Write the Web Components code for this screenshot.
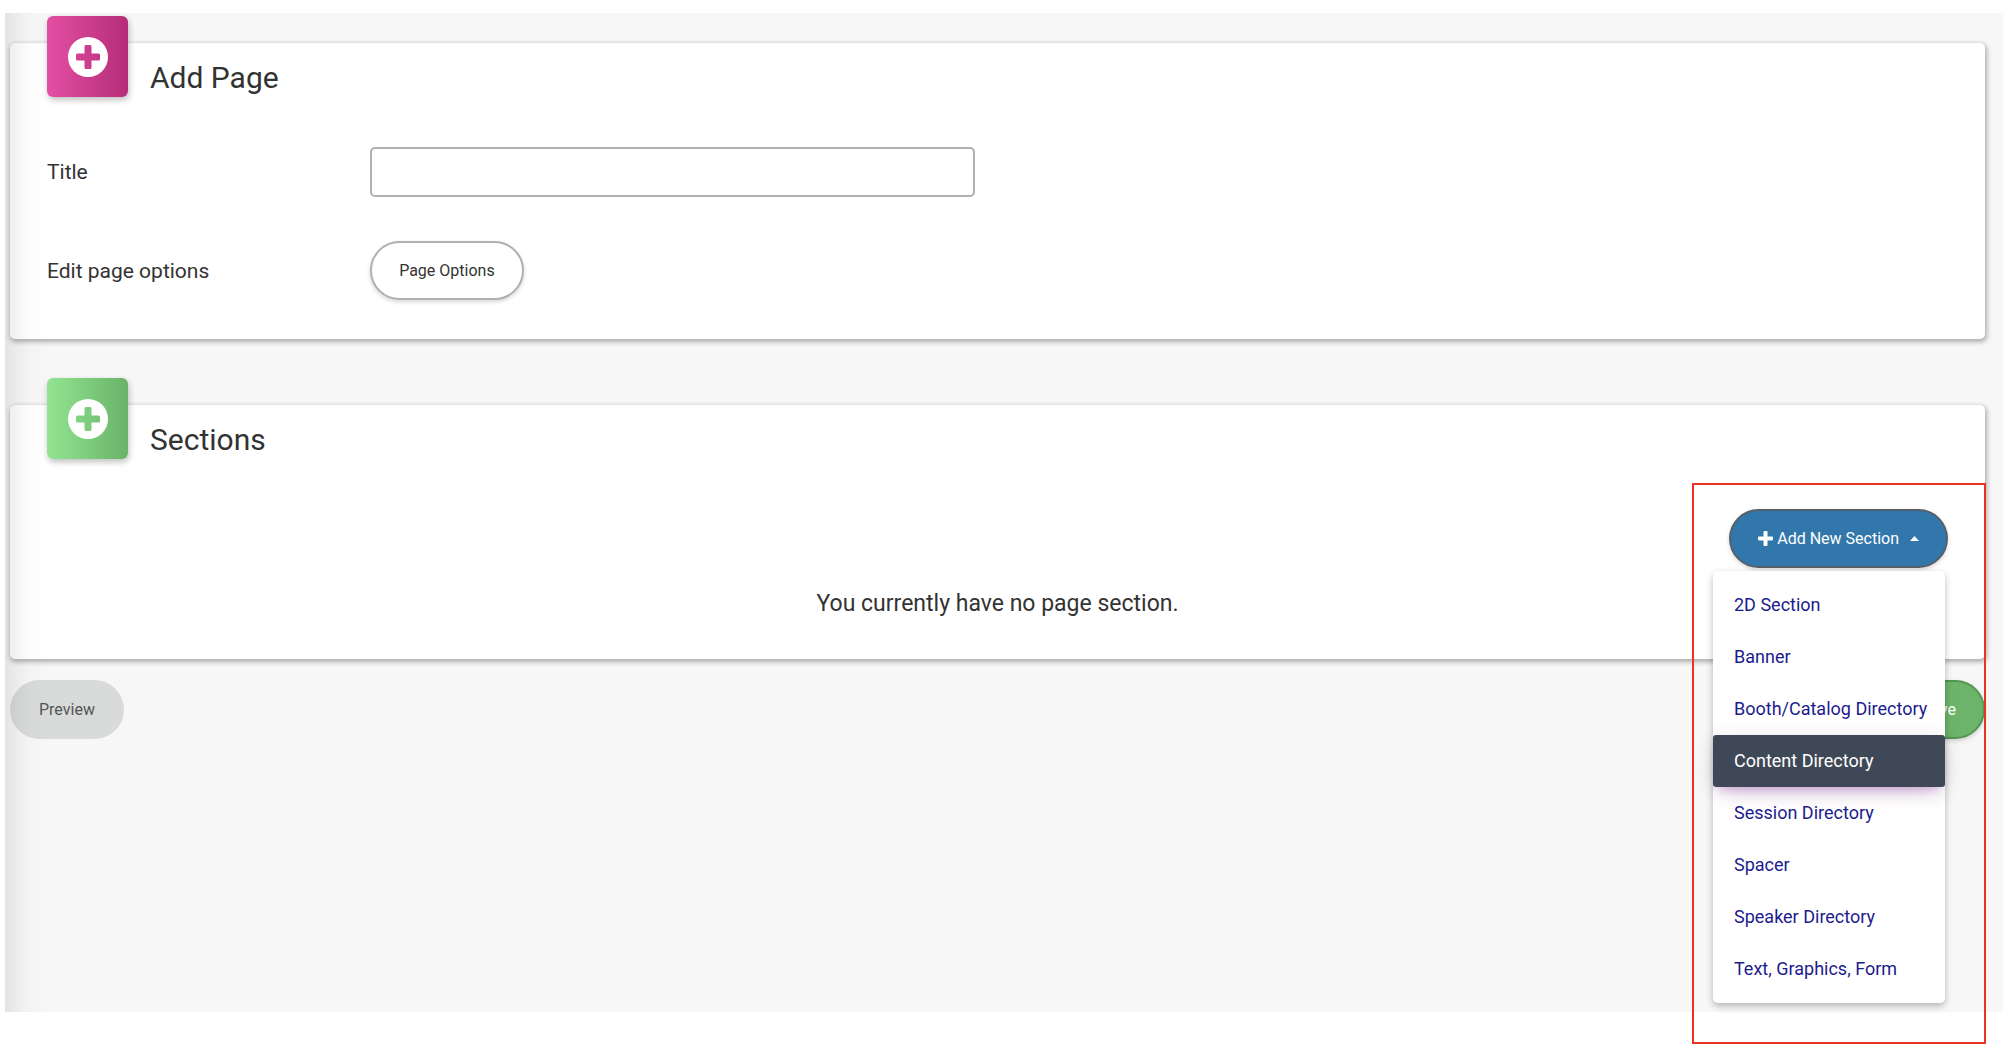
<!DOCTYPE html>
<html lang="en">
<head>
<meta charset="utf-8">
<title>Add Page</title>
<style>
    body {
        box-sizing: border-box;
        min-height: 100vh;
        margin: 0;
        padding: 13px 13px 42px 5px;
        background: #fff;
        color: #333;
        font-family: Roboto, "Liberation Sans", sans-serif;
    }
</style>
</head>
<body>
<page-panel>
    <section-card heading="Add Page" color="pink">
        <form-row label="Title" type="text"></form-row>
        <form-row label="Edit page options" type="button" text="Page Options"></form-row>
    </section-card>
    <section-card heading="Sections" color="green">
        <section-menu active="Content Directory"></section-menu>
        <empty-message>You currently have no page section.</empty-message>
    </section-card>
    <pill-button slot="footer" kind="muted">Preview</pill-button>
    <pill-button slot="footer" kind="success">Save</pill-button>
</page-panel>

<script>
const pillStyle = `
    button {
        display: flex;
        align-items: center;
        box-sizing: border-box;
        height: 59px;
        padding: 0 27px;
        border: 2px solid #b0b0b0;
        border-radius: 30px;
        background: #fff;
        color: #333;
        font: 400 16px/24px Roboto, "Liberation Sans", sans-serif;
        white-space: nowrap;
        cursor: pointer;
        box-shadow: 0 2px 4px rgba(0, 0, 0, .16);
    }
`;

class PagePanel extends HTMLElement {
    constructor() {
        super();
        this.attachShadow({ mode: 'open' });
    }

    connectedCallback() {
        this.shadowRoot.innerHTML = `
        <style>
            :host {
                display: block;
                position: relative;
                box-sizing: border-box;
                min-height: calc(100vh - 55px);
                padding: 30px 18px 30px 5px;
                background: #f7f7f7;
            }
            /* shade along the left edge, over the cards */
            :host::after {
                content: '';
                position: absolute;
                inset: 0 auto 0 0;
                width: 44px;
                background: linear-gradient(90deg, rgba(0, 0, 0, .08), rgba(0, 0, 0, .015) 50%, rgba(0, 0, 0, 0));
                pointer-events: none;
            }
            main {
                display: flex;
                flex-direction: column;
                gap: 66px;
            }
            footer {
                display: flex;
                justify-content: space-between;
                margin-top: 21px;
            }
        </style>
        <main><slot></slot></main>
        <footer><slot name="footer"></slot></footer>
        `;
    }
}

class SectionCard extends HTMLElement {
    constructor() {
        super();
        this.attachShadow({ mode: 'open' });
    }

    get heading() {
        return this.getAttribute('heading');
    }

    connectedCallback() {
        this.shadowRoot.innerHTML = `
        <style>
            :host {
                display: block;
                padding: 0 37px 39px;
                border-radius: 5px;
                background: #fff;
                box-shadow: 1px 2px 5px 1px rgba(0, 0, 0, .3);
                --from: #e34fa3;
                --to: #b52d78;
            }
            :host([color=green]) {
                --from: #93e592;
                --to: #69b368;
            }
            header {
                display: flex;
                align-items: flex-start;
                gap: 22px;
                height: 104px;
            }
            .badge {
                display: grid;
                place-items: center;
                width: 81px;
                height: 81px;
                margin-top: -27px;
                border-radius: 6px;
                background: linear-gradient(90deg, var(--from), var(--to));
                box-shadow: 1px 3px 6px rgba(0, 0, 0, .25);
            }
            h2 {
                margin: 17px 0 0;
                font-size: 30px;
                font-weight: 400;
                line-height: 36px;
            }
            .body {
                display: flex;
                flex-direction: column;
            }
        </style>
        <header>
            <div class="badge">
                <svg width="40" height="40" viewBox="0 0 40 40" aria-hidden="true">
                    <path fill="#fff" fill-rule="evenodd" d="M20 0a20 20 0 1 0 0 40a20 20 0 1 0 0-40zM18 8h4a1.500 1.500 0 0 1 1.500 1.500v7h7a1.500 1.500 0 0 1 1.500 1.500v4a1.500 1.500 0 0 1-1.500 1.500h-7v7a1.500 1.500 0 0 1-1.500 1.500h-4a1.500 1.500 0 0 1-1.500-1.500v-7h-7a1.500 1.500 0 0 1-1.500-1.500v-4a1.500 1.500 0 0 1 1.500-1.500h7v-7a1.500 1.500 0 0 1 1.500-1.500z"/>
                </svg>
            </div>
            <h2>${this.heading}</h2>
        </header>
        <div class="body"><slot></slot></div>
        `;
    }
}

class FormRow extends HTMLElement {
    constructor() {
        super();
        this.attachShadow({ mode: 'open' });
    }

    get control() {
        if (this.getAttribute('type') == 'button') {
            return `<button id="control" type="button">${this.getAttribute('text')}</button>`;
        }
        return `<input id="control" type="text">`;
    }

    connectedCallback() {
        this.shadowRoot.innerHTML = `
        <style>
            ${pillStyle}
            :host {
                display: grid;
                grid-template-columns: 17% 1fr;
                align-items: center;
            }
            :host(:not(:first-child)) {
                margin-top: 44px;
            }
            label {
                font-size: 21px;
                line-height: 28px;
            }
            input {
                box-sizing: border-box;
                width: min(605px, 100%);
                height: 50px;
                padding: 0 12px;
                border: 2px solid #b0b0b0;
                border-radius: 5px;
                background: #fff;
                font: 400 21px Roboto, sans-serif;
            }
            button {
                justify-self: start;
            }
        </style>
        <label for="control">${this.getAttribute('label')}</label>
        ${this.control}
        `;
    }
}

class EmptyMessage extends HTMLElement {
    constructor() {
        super();
        this.attachShadow({ mode: 'open' });
    }

    connectedCallback() {
        this.shadowRoot.innerHTML = `
        <style>
            :host {
                display: block;
                margin-top: 20px;
                font-size: 23px;
                line-height: 32px;
                text-align: center;
            }
        </style>
        <slot></slot>
        `;
    }
}

class PillButton extends HTMLElement {
    constructor() {
        super();
        this.attachShadow({ mode: 'open' });
    }

    connectedCallback() {
        this.shadowRoot.innerHTML = `
        <style>
            ${pillStyle}
            :host {
                display: block;
            }
            :host([kind=muted]) button {
                border-color: #d9dbda;
                background: #d9dbda;
                color: #555;
                box-shadow: none;
            }
            :host([kind=success]) button {
                border-color: #549653;
                background: #6bb469;
                color: #fff;
            }
        </style>
        <button type="button"><slot></slot></button>
        `;
    }
}

class SectionMenu extends HTMLElement {
    constructor() {
        super();
        this.attachShadow({ mode: 'open' });
        this.items = [
            '2D Section',
            'Banner',
            'Booth/Catalog Directory',
            'Content Directory',
            'Session Directory',
            'Spacer',
            'Speaker Directory',
            'Text, Graphics, Form'
        ];
    }

    get active() {
        return this.getAttribute('active');
    }

    connectedCallback() {
        const links = this.items.map(item =>
            `<a href="#" class="${item == this.active ? 'active' : ''}">${item}</a>`
        ).join('');

        this.shadowRoot.innerHTML = `
        <style>
            ${pillStyle}
            :host {
                display: block;
                position: relative;
                z-index: 1;
                align-self: flex-end;
            }
            button {
                border-color: #57606a;
                background: #3177ab;
                color: #fff;
            }
            .plus {
                margin-right: 4px;
            }
            .caret {
                margin-left: 11px;
            }
            nav {
                position: absolute;
                top: 62px;
                right: 3px;
                box-sizing: border-box;
                min-width: 232px;
                padding: 8px 0;
                border-radius: 5px;
                background: #fff;
                box-shadow: 0 3px 7px rgba(0, 0, 0, .28);
            }
            a {
                display: block;
                padding: 0 17px 0 21px;
                color: #1c1c8c;
                font-size: 18px;
                font-weight: 400;
                line-height: 52px;
                text-decoration: none;
                white-space: nowrap;
            }
            a.active {
                position: relative;
                border-radius: 3px;
                background: #3f4857;
                color: #fff;
                box-shadow: 0 12px 20px -10px rgba(156, 39, 176, .28), 0 4px 20px rgba(0, 0, 0, .12), 0 7px 8px -5px rgba(156, 39, 176, .2);
            }
            /* frame round the button and its open menu */
            .frame {
                position: absolute;
                top: -26px;
                right: -38px;
                left: -37px;
                height: 557px;
                border: 2px solid #eb3223;
                pointer-events: none;
            }
        </style>
        <button type="button" aria-haspopup="true" aria-expanded="true">
            <svg class="plus" width="15" height="15" viewBox="0 0 15 15" aria-hidden="true">
                <path fill="#fff" d="M5.500 1q0-1 1-1h2q1 0 1 1v4.500h4.500q1 0 1 1v2q0 1-1 1h-4.500v4.500q0 1-1 1h-2q-1 0-1-1v-4.500h-4.500q-1 0-1-1v-2q0-1 1-1h4.500z"/>
            </svg>
            Add New Section
            <svg class="caret" width="9" height="5" viewBox="0 0 9 5" aria-hidden="true">
                <path fill="#fff" d="M0 5L4.500 0L9 5z"/>
            </svg>
        </button>
        <nav>${links}</nav>
        <div class="frame"></div>
        `;
    }
}

customElements.define('page-panel', PagePanel);
customElements.define('section-card', SectionCard);
customElements.define('form-row', FormRow);
customElements.define('empty-message', EmptyMessage);
customElements.define('pill-button', PillButton);
customElements.define('section-menu', SectionMenu);
</script>
</body>
</html>
